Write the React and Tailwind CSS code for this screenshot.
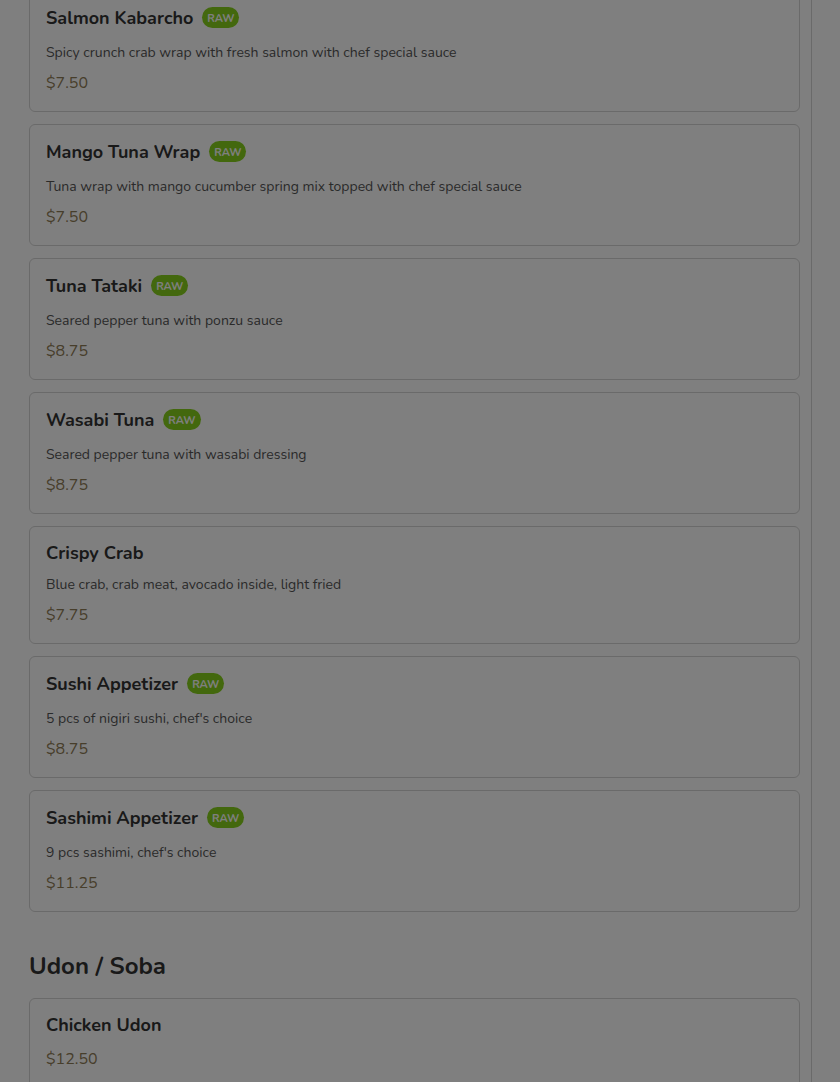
import React from 'react';

const rolls = [
    { name: 'Salmon Kabarcho', raw: true, desc: 'Spicy crunch crab wrap with fresh salmon with chef special sauce', price: '$7.50' },
    { name: 'Mango Tuna Wrap', raw: true, desc: 'Tuna wrap with mango cucumber spring mix topped with chef special sauce', price: '$7.50' },
    { name: 'Tuna Tataki', raw: true, desc: 'Seared pepper tuna with ponzu sauce', price: '$8.75' },
    { name: 'Wasabi Tuna', raw: true, desc: 'Seared pepper tuna with wasabi dressing', price: '$8.75' },
    { name: 'Crispy Crab', raw: false, desc: 'Blue crab, crab meat, avocado inside, light fried', price: '$7.75' },
    { name: 'Sushi Appetizer', raw: true, desc: "5 pcs of nigiri sushi, chef's choice", price: '$8.75' },
    { name: 'Sashimi Appetizer', raw: true, desc: "9 pcs sashimi, chef's choice", price: '$11.25' },
];

const udon = [{ name: 'Chicken Udon', raw: false, desc: '', price: '$12.50' }];

function MenuCard({ item }) {
    return (
        <div className="border border-[#d4d4d4] rounded-md bg-white px-4 py-4">
            <div className={`flex items-center gap-[9px] ${item.raw ? 'h-[21px] mb-[15px]' : 'h-5 mb-3'}`}>
                <h3 className="text-[18px] leading-5 font-bold text-[#333333]">{item.name}</h3>
                {item.raw && (
                    <span className="rounded-full bg-[#86d01c] px-[5px] h-[21px] pt-[3px] leading-[18px] text-[11px] font-bold text-white">
                        RAW
                    </span>
                )}
            </div>
            {item.desc && (
                <p className="text-sm leading-5 text-[#555555] mb-2">{item.desc}</p>
            )}
            <div className="text-base leading-6 text-[#8f7c56]">{item.price}</div>
        </div>
    );
}

export default function App() {
    return (
        <div className="min-h-screen bg-white font-['Nunito','Lato','Open_Sans',sans-serif] overflow-hidden">
            <div className="flex">
                <main className="w-[812px] shrink-0 border-r border-[#d4d4d4] pl-[29px] pr-[11px] min-h-screen">
                    <div className="flex flex-col gap-3 -mt-[10px]">
                        {rolls.map((item) => (
                            <MenuCard key={item.name} item={item} />
                        ))}
                    </div>

                    {/* Udon / Soba */}
                    <h2 className="mt-[38px] mb-4 text-2xl leading-8 font-bold text-[#333333]">Udon / Soba</h2>
                    <div className="flex flex-col gap-3">
                        {udon.map((item) => (
                            <MenuCard key={item.name} item={item} />
                        ))}
                    </div>
                </main>
            </div>

            {/* modal backdrop */}
            <div className="fixed inset-0 bg-black/50"></div>
        </div>
    );
}
